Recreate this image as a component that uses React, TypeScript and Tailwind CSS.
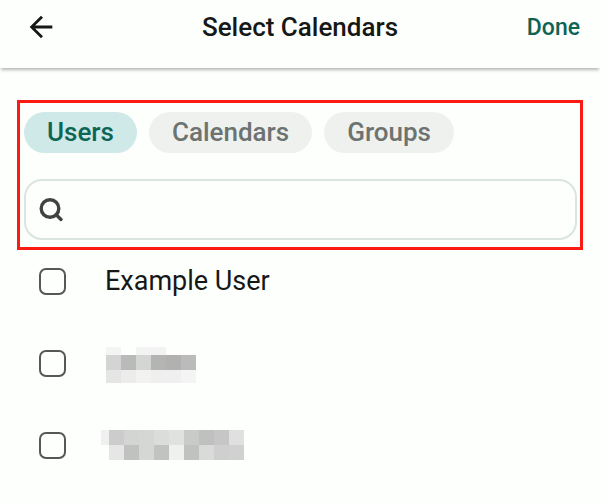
import React, { useState } from 'react';
import { MdArrowBack } from 'react-icons/md';

interface Block {
  x: number;
  y: number;
  w: number;
  h: number;
  fill: string;
}

interface Person {
  id: string;
  name: string;
  width?: number;
  height?: number;
  blocks?: Block[];
}

const tabs = ['Users', 'Calendars', 'Groups'];

const people: Person[] = [
  { id: 'example', name: 'Example User' },
  {
    id: 'hidden-1',
    name: 'Hidden user 1',
    width: 95,
    height: 40,
    blocks: [
      { x: 5, y: 4, w: 15, h: 8, fill: '#f3f4f3' },
      { x: 35, y: 4, w: 30, h: 8, fill: '#f2f3f2' },
      { x: 5, y: 12, w: 15, h: 15, fill: '#d3d4d3' },
      { x: 20, y: 12, w: 15, h: 15, fill: '#bababa' },
      { x: 35, y: 12, w: 15, h: 15, fill: '#d4d6d4' },
      { x: 50, y: 12, w: 15, h: 15, fill: '#b3b4b3' },
      { x: 65, y: 12, w: 15, h: 15, fill: '#b1b2b0' },
      { x: 80, y: 12, w: 15, h: 15, fill: '#babbba' },
      { x: 5, y: 27, w: 15, h: 13, fill: '#e4e5e4' },
      { x: 20, y: 27, w: 15, h: 13, fill: '#eeeceb' },
      { x: 35, y: 27, w: 15, h: 13, fill: '#f2f2f1' },
      { x: 50, y: 27, w: 30, h: 13, fill: '#eeefee' },
      { x: 80, y: 27, w: 15, h: 13, fill: '#f3f4f3' },
    ],
  },
  {
    id: 'hidden-2',
    name: 'Hidden user 2',
    width: 143,
    height: 30,
    blocks: [
      { x: 0, y: 0, w: 8, h: 15, fill: '#eff0ef' },
      { x: 8, y: 0, w: 15, h: 15, fill: '#cbcccb' },
      { x: 23, y: 0, w: 15, h: 15, fill: '#d3d5d3' },
      { x: 38, y: 0, w: 15, h: 15, fill: '#d5d7d5' },
      { x: 53, y: 0, w: 15, h: 15, fill: '#dbdddb' },
      { x: 68, y: 0, w: 15, h: 15, fill: '#e0e1e0' },
      { x: 83, y: 0, w: 15, h: 15, fill: '#c9cbc9' },
      { x: 98, y: 0, w: 15, h: 15, fill: '#bfc1bf' },
      { x: 113, y: 0, w: 15, h: 15, fill: '#c5c6c5' },
      { x: 128, y: 0, w: 15, h: 15, fill: '#dfe0df' },
      { x: 8, y: 15, w: 15, h: 15, fill: '#e5e6e5' },
      { x: 23, y: 15, w: 15, h: 15, fill: '#c0c2c0' },
      { x: 38, y: 15, w: 15, h: 15, fill: '#d5d7d5' },
      { x: 53, y: 15, w: 15, h: 15, fill: '#c1c3c1' },
      { x: 68, y: 15, w: 15, h: 15, fill: '#eff0ef' },
      { x: 83, y: 15, w: 15, h: 15, fill: '#c0c2c0' },
      { x: 98, y: 15, w: 15, h: 15, fill: '#d9dad9' },
      { x: 113, y: 15, w: 15, h: 15, fill: '#cecfce' },
      { x: 128, y: 15, w: 15, h: 15, fill: '#d0d1d0' },
    ],
  },
];

const SearchIcon: React.FC = () => (
  <svg width="24" height="24" viewBox="0 0 24 24" fill="none" stroke="#3f4341" strokeWidth="3.4" className="shrink-0" aria-hidden="true">
    <circle cx="11" cy="10.5" r="8.8" />
    <path d="M17.2 16.8l4.8 4.6" strokeLinecap="round" />
  </svg>
);

const App: React.FC = () => {
  const [activeTab, setActiveTab] = useState('Users');
  const [query, setQuery] = useState('');
  const [selected, setSelected] = useState<string[]>([]);

  const toggle = (id: string) => {
    setSelected(prev => (prev.includes(id) ? prev.filter(p => p !== id) : [...prev, id]));
  };

  return (
    <div className="min-h-screen bg-[#fdfffc] font-['Roboto',sans-serif] text-[#161817]">
      <header className="grid grid-cols-[1fr_auto_1fr] items-center px-5 pt-[7px] pb-[21px] shadow-[0_3px_3px_-1px_rgba(0,0,0,0.28)]">
        <button aria-label="Back" className="justify-self-start pl-1">
          <MdArrowBack className="size-[34px]" />
        </button>
        <h1 className="text-[26px] leading-10 font-medium">Select Calendars</h1>
        <button className="justify-self-end pt-0.5 text-[23px] leading-[38px] font-medium text-[#0f6353]">Done</button>
      </header>

      <main className="pt-8">
        <section className="mx-[17px] border-3 border-[#fb1b12] pt-[9px] pb-[7px] pl-1 pr-[3px]">
          <div className="flex gap-3">
            {tabs.map(tab => (
              <button
                key={tab}
                onClick={() => setActiveTab(tab)}
                className={`rounded-full px-[23px] text-[26px] leading-[41px] font-medium ${
                  activeTab === tab ? 'bg-[#cfe8e8] text-[#0b6655]' : 'bg-[#eff1ef] text-[#6c7370]'
                }`}
              >
                {tab}
              </button>
            ))}
          </div>
          <label className="mt-[26px] flex h-[61px] items-center gap-3 rounded-[18px] border-2 border-[#dae4e0] px-[13px]">
            <SearchIcon />
            <input
              type="text"
              aria-label="Search"
              value={query}
              onChange={e => setQuery(e.target.value)}
              className="min-w-0 grow bg-transparent text-[26px] focus:outline-none"
            />
          </label>
        </section>

        <ul className="flex flex-col gap-[50px] py-[15px] pl-[39px]">
          {people.map(person => (
            <li key={person.id} className="flex h-8 items-center">
              <input
                id={person.id}
                type="checkbox"
                checked={selected.includes(person.id)}
                onChange={() => toggle(person.id)}
                className="size-[27px] shrink-0 appearance-none rounded-[7px] border-2 border-[#555856] checked:bg-[#0b6655]"
              />
              {person.blocks ? (
                <label htmlFor={person.id} className="pl-[35px]">
                  <svg width={person.width} height={person.height} role="img" aria-label={person.name} shapeRendering="crispEdges">
                    {person.blocks.map((b, i) => (
                      <rect key={i} x={b.x} y={b.y} width={b.w} height={b.h} fill={b.fill} />
                    ))}
                  </svg>
                </label>
              ) : (
                <label htmlFor={person.id} className="pl-[39px] text-[27px] leading-8">
                  {person.name}
                </label>
              )}
            </li>
          ))}
        </ul>
      </main>
    </div>
  );
};

export default App;
